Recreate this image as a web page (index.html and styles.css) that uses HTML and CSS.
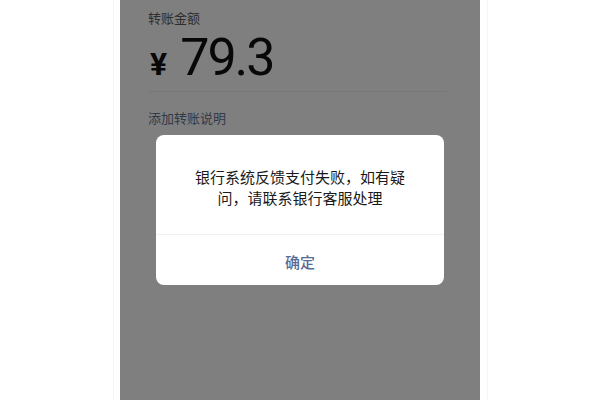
FILE: index.html
```html
<!DOCTYPE html>
<html lang="zh-CN">
<head>
    <meta charset="UTF-8">
    <meta name="viewport" content="width=device-width, initial-scale=1.0">
    <title>转账</title>
    <link rel="stylesheet" href="styles.css">
</head>
<body>
    <div class="side side-left"></div>

    <div class="phone">
        <div class="transfer">
            <p class="amount-label">转账金额</p>
            <div class="amount">
                <span class="currency">¥</span>
                <span class="value">79.3</span>
            </div>
            <a class="remark-link">添加转账说明</a>
        </div>

        <!-- 弹窗遮罩 -->
        <div class="mask">
            <div class="dialog">
                <div class="dialog-body">
                    <p>银行系统反馈支付失败，如有疑问，请联系银行客服处理</p>
                </div>
                <button class="dialog-btn">确定</button>
            </div>
        </div>
    </div>

    <div class="side side-right"></div>
</body>
</html>
```

FILE: styles.css
```css
:root {
    --mask: rgba(0, 0, 0, 0.5);
    --text-main: #111;
    --text-label: #5c5c5c;
    --link-color: #576b95;
}

* {
    margin: 0;
    padding: 0;
    box-sizing: border-box;
}

body {
    font-family: 'Noto Sans CJK SC', 'Noto Sans', sans-serif;
    background: #fff;
    width: 600px;
    height: 400px;
    display: flex;
    overflow: hidden;
}

.side {
    height: 100%;
    background: #fff;
}

.side-left {
    width: 114px;
    margin-right: 6px;
    border-right: 1px solid #f6f6f6;
}

.side-right {
    width: 113px;
    margin-left: 7px;
    border-left: 1px solid #f6f6f6;
}

.phone {
    position: relative;
    width: 360px;
    height: 100%;
    background: #fff;
}

.transfer {
    padding: 10px 0 0 28px;
}

.amount-label {
    font-size: 13px;
    line-height: 16px;
    color: var(--text-label);
}

.amount {
    display: flex;
    align-items: baseline;
    height: 66px;
    padding-top: 3px;
    margin-right: 33px;
    border-bottom: 1px solid #f0f0f0;
    color: var(--text-main);
}

.currency {
    font-family: Roboto, 'Noto Sans', sans-serif;
    font-size: 32px;
    font-weight: 700;
    margin-left: 2px;
    margin-right: 13px;
}

.value {
    font-family: Roboto, 'Noto Sans', sans-serif;
    font-size: 52px;
    line-height: 58px;
    letter-spacing: -2px;
}

.remark-link {
    display: block;
    margin-top: 18px;
    font-size: 13px;
    line-height: 16px;
    color: #68738f;
}

.mask {
    position: absolute;
    inset: 0;
    background: var(--mask);
    display: flex;
    justify-content: center;
    align-items: flex-start;
    padding-top: 135px;
}

.dialog {
    width: 288px;
    background: #fff;
    border-radius: 8px;
    overflow: hidden;
}

.dialog-body {
    height: 100px;
    padding: 0 36px;
    display: flex;
    align-items: center;
    justify-content: center;
    border-bottom: 1px solid #f0f0f0;
}

.dialog-body p {
    font-size: 15px;
    line-height: 21px;
    color: #1a1a1a;
    text-align: center;
    padding-top: 4px;
}

.dialog-btn {
    display: block;
    width: 100%;
    height: 50px;
    border: none;
    background: none;
    font-family: inherit;
    font-size: 15px;
    font-weight: 500;
    color: var(--link-color);
    padding-top: 3px;
}
```
